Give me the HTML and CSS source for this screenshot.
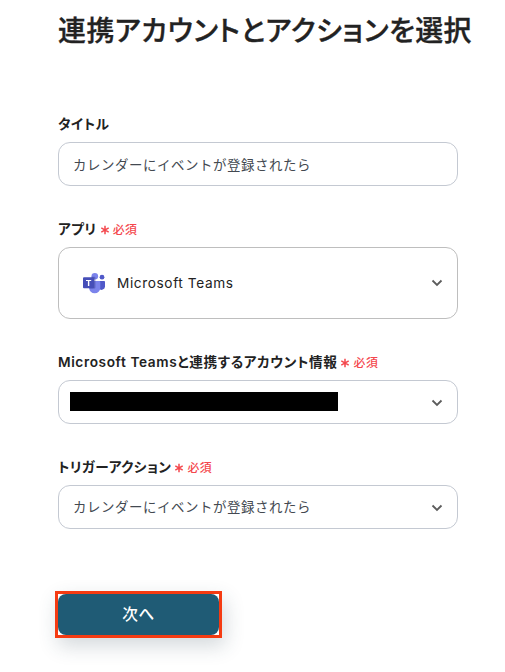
FILE: index.html
```html
<!DOCTYPE html>
<html lang="ja">
<head>
<meta charset="utf-8">
<title>連携アカウントとアクションを選択</title>
<link rel="stylesheet" href="styles.css">
</head>
<body>
<main class="page">
  <h1 class="heading">連携アカウントとアクションを選択</h1>
  <form class="form">
    <div class="field">
      <div class="label"><span class="label-title">タイトル</span></div>
      <div class="control"><span class="value">カレンダーにイベントが登録されたら</span></div>
    </div>
    <div class="field">
      <div class="label"><span class="label-app">アプリ</span><span class="required"><svg class="star" viewBox="0 0 10 10"><path d="M5 .8v8.4M1.3 2.9l7.4 4.2M8.7 2.9L1.3 7.1"/></svg><span class="required-text">必須</span></span></div>
      <div class="control control-app">
        <svg class="teams" viewBox="0 0 24 22">
          <circle cx="20" cy="5.2" r="2.4" fill="#5059c9"/>
          <path d="M17 9h5.2a.8.8 0 0 1 .8.8v4.7a3.5 3.5 0 0 1-6 2.3z" fill="#5059c9"/>
          <circle cx="12.8" cy="4.2" r="3.3" fill="#7b83eb"/>
          <path d="M8 9h9.3a1 1 0 0 1 1 1v5.7a5.6 5.6 0 0 1-11.2 0V10A1 1 0 0 1 8 9z" fill="#7b83eb"/>
          <path d="M9.6 4.8h2.8a1 1 0 0 1 1 1v9.8a1 1 0 0 1-1 1H7.2z" fill="#3b4197" opacity=".5"/>
          <rect x="1" y="5.2" width="11" height="11" rx="1" fill="#464eb8"/>
          <path d="M4 7.9h5.2v1.2H7.3v5H5.9v-5H4z" fill="#fff"/>
        </svg>
        <span class="app-name">Microsoft Teams</span>
        <svg class="chevron" viewBox="0 0 12 8"><path d="M1.5 1.5L6 6l4.5-4.5"/></svg>
      </div>
    </div>
    <div class="field">
      <div class="label"><span class="label-account">Microsoft Teamsと連携するアカウント情報</span><span class="required"><svg class="star" viewBox="0 0 10 10"><path d="M5 .8v8.4M1.3 2.9l7.4 4.2M8.7 2.9L1.3 7.1"/></svg><span class="required-text">必須</span></span></div>
      <div class="control control-redacted">
        <span class="redaction"></span>
        <svg class="chevron chevron-low" viewBox="0 0 12 8"><path d="M1.5 1.5L6 6l4.5-4.5"/></svg>
      </div>
    </div>
    <div class="field">
      <div class="label"><span class="label-trigger">トリガーアクション</span><span class="required"><svg class="star" viewBox="0 0 10 10"><path d="M5 .8v8.4M1.3 2.9l7.4 4.2M8.7 2.9L1.3 7.1"/></svg><span class="required-text">必須</span></span></div>
      <div class="control">
        <span class="value value-select">カレンダーにイベントが登録されたら</span>
        <svg class="chevron chevron-low" viewBox="0 0 12 8"><path d="M1.5 1.5L6 6l4.5-4.5"/></svg>
      </div>
    </div>
    <div class="highlight"><button class="next" type="button">次へ</button></div>
  </form>
</main>
</body>
</html>
```
FILE: styles.css
```css
* { box-sizing: border-box; }
body {
  margin: 0;
  height: 672px;
  overflow: hidden;
  background: #fff;
  color: #222;
  font-family: Inter, "Noto Sans CJK JP", sans-serif;
  font-size: 13.65px;
  font-feature-settings: "palt";
  letter-spacing: .04em;
}
.page { padding: 11px 0 0 58px; }
.heading {
  margin: 0;
  font-size: 27.85px;
  line-height: 40px;
  font-weight: 500;
  -webkit-text-stroke: .35px #222;
  white-space: nowrap;
}
.form { width: 400px; padding-top: 61px; }
.field { margin-bottom: 31px; }
.label {
  display: flex;
  align-items: center;
  height: 24px;
  margin-bottom: 6px;
  line-height: 24px;
  font-weight: 600;
  white-space: nowrap;
}
.label-account { letter-spacing: .61px; }
.label-trigger { letter-spacing: .48px; }
.required {
  display: flex;
  align-items: center;
  gap: 3px;
  margin-left: 3px;
  color: #f4474d;
  font-size: 11.9px;
  font-weight: 500;
}
.required-text { padding-top: 1px; }
.star {
  width: 10px;
  height: 10px;
  margin-top: 1px;
  fill: none;
  stroke: currentColor;
  stroke-width: 1.5;
}
.control {
  display: flex;
  align-items: center;
  height: 44px;
  padding: 0 14px;
  border: 1px solid #c4c9d2;
  border-radius: 12px;
  color: #434951;
  white-space: nowrap;
}
.value {
  font-size: 13.44px;
  letter-spacing: .56px;
  font-feature-settings: normal;
}
.value-select { padding-bottom: 2px; }
.control-app { height: 72px; padding-left: 23px; border-color: #bebebe; color: #222; }
.control-redacted { padding-left: 11px; }
.teams { width: 24px; height: 22px; margin-right: 11px; }
.app-name { padding-bottom: 1px; letter-spacing: .61px; }
.chevron {
  width: 12px;
  height: 8px;
  margin-left: auto;
  fill: none;
  stroke: #5c5c5c;
  stroke-width: 1.8;
}
.chevron-low { margin-top: 2px; }
.redaction { width: 267.5px; height: 19px; background: #000; margin-top: -2px; }
.highlight {
  width: 167px;
  height: 47px;
  margin: 62px 0 0 -3px;
  border: 3px solid #f53b12;
  box-shadow: 3px 8px 20px rgba(40, 65, 80, .2);
}
.next {
  display: block;
  width: 100%;
  height: 100%;
  padding: 1px 0 0;
  border: 0;
  border-radius: 8px;
  background: #1f5b75;
  color: #fff;
  font: 500 15.6px/40px Inter, "Noto Sans CJK JP", sans-serif;
  letter-spacing: .04em;
}
```
